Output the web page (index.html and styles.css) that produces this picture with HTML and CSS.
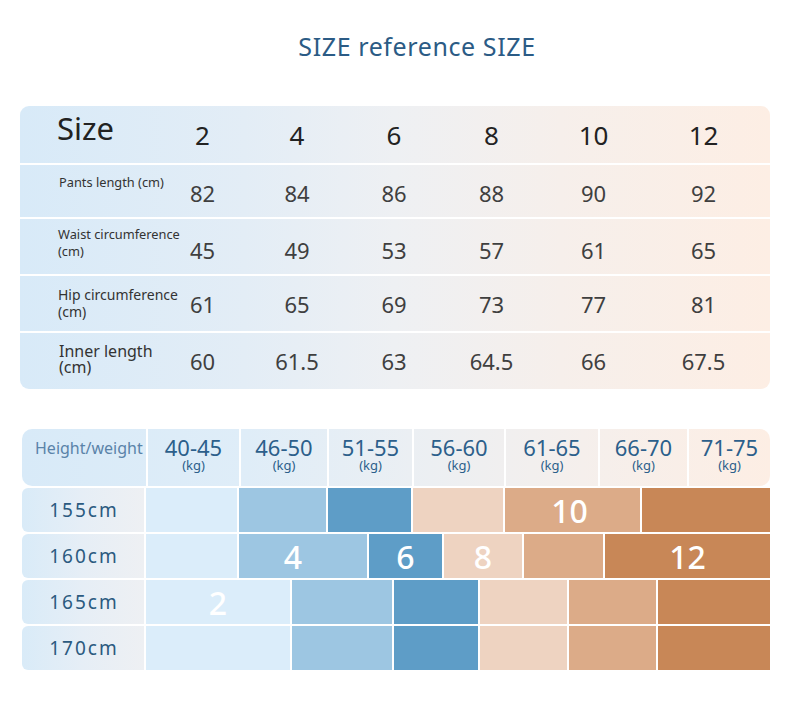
FILE: index.html
```html
<!DOCTYPE html>
<html>
<head>
<meta charset="utf-8">
<link rel="stylesheet" href="styles.css">
</head>
<body>
<div class="page">
  <h1 class="title">SIZE reference SIZE</h1>

  <div class="size-table">
    <div class="row head">
      <div class="label size-word">Size</div>
      <div class="num">2</div><div class="num">4</div><div class="num">6</div><div class="num">8</div><div class="num">10</div><div class="num">12</div>
    </div>
    <div class="row r1">
      <div class="label l-pants">Pants length (cm)</div>
      <div class="num">82</div><div class="num">84</div><div class="num">86</div><div class="num">88</div><div class="num">90</div><div class="num">92</div>
    </div>
    <div class="row r2">
      <div class="label l-waist">Waist circumference<br>(cm)</div>
      <div class="num">45</div><div class="num">49</div><div class="num">53</div><div class="num">57</div><div class="num">61</div><div class="num">65</div>
    </div>
    <div class="row r3">
      <div class="label l-hip">Hip circumference<br>(cm)</div>
      <div class="num">61</div><div class="num">65</div><div class="num">69</div><div class="num">73</div><div class="num">77</div><div class="num">81</div>
    </div>
    <div class="row r4">
      <div class="label l-inner">Inner length<br>(cm)</div>
      <div class="num">60</div><div class="num">61.5</div><div class="num">63</div><div class="num">64.5</div><div class="num">66</div><div class="num">67.5</div>
    </div>
  </div>

  <div class="hw-table">
    <div class="hw-head">
      <div class="hw-corner">Height/weight</div>
      <div class="hw-range w1"><span class="kgv">40-45</span><span class="kg">(kg)</span></div>
      <div class="hw-range w2"><span class="kgv">46-50</span><span class="kg">(kg)</span></div>
      <div class="hw-range w3"><span class="kgv">51-55</span><span class="kg">(kg)</span></div>
      <div class="hw-range w4"><span class="kgv">56-60</span><span class="kg">(kg)</span></div>
      <div class="hw-range w5"><span class="kgv">61-65</span><span class="kg">(kg)</span></div>
      <div class="hw-range w6"><span class="kgv">66-70</span><span class="kg">(kg)</span></div>
      <div class="hw-range w7"><span class="kgv">71-75</span><span class="kg">(kg)</span></div>
    </div>

    <div class="hw-row">
      <div class="hw-label">155cm</div>
      <div class="seg c1" style="width:91px"></div>
      <div class="seg c2" style="width:87px"></div>
      <div class="seg c3" style="width:83px"></div>
      <div class="seg c4" style="width:90px"></div>
      <div class="seg c5 t10" style="width:135px">10</div>
      <div class="seg c6 grow"></div>
    </div>
    <div class="hw-row">
      <div class="hw-label">160cm</div>
      <div class="seg c1" style="width:91px"></div>
      <div class="seg c2 t4" style="width:128px">4</div>
      <div class="seg c3" style="width:73px">6</div>
      <div class="seg c4" style="width:78px">8</div>
      <div class="seg c5" style="width:79px"></div>
      <div class="seg c6 grow">12</div>
    </div>
    <div class="hw-row">
      <div class="hw-label">165cm</div>
      <div class="seg c1" style="width:144px">2</div>
      <div class="seg c2" style="width:100px"></div>
      <div class="seg c3" style="width:84px"></div>
      <div class="seg c4" style="width:87px"></div>
      <div class="seg c5" style="width:87px"></div>
      <div class="seg c6 grow"></div>
    </div>
    <div class="hw-row">
      <div class="hw-label">170cm</div>
      <div class="seg c1" style="width:144px"></div>
      <div class="seg c2" style="width:100px"></div>
      <div class="seg c3" style="width:84px"></div>
      <div class="seg c4" style="width:87px"></div>
      <div class="seg c5" style="width:87px"></div>
      <div class="seg c6 grow"></div>
    </div>
  </div>
</div>
</body>
</html>
```

FILE: styles.css
```css
* { box-sizing: border-box; }
html, body { margin: 0; padding: 0; background: #ffffff; }
body { font-family: "Noto Sans", "Open Sans", sans-serif; width: 790px; height: 704px; overflow: hidden; }

.page { padding-top: 31px; }

.title {
  margin: 0;
  text-align: center;
  font-size: 25px;
  line-height: 30px;
  font-weight: 400;
  letter-spacing: 0.6px;
  color: #2b5b85;
  padding-left: 44px;
}

/* ---------- size table ---------- */
.size-table {
  margin: 45px 0 0 20px;
  width: 750px;
  border-radius: 9px;
  overflow: hidden;
  display: flex;
  flex-direction: column;
  gap: 2px;
}
.row {
  display: grid;
  grid-template-columns: 136px 93px 96px 98px 97px 107px 113px 1fr;
  align-items: center;
  background: linear-gradient(90deg, #d8eaf8 0%, #e3edf6 30%, #eef0f3 50%, #f6efeb 72%, #fdeee4 100%);
}
.row.head { height: 57px; }
.row.r1 { height: 52px; }
.row.r2 { height: 55px; }
.row.r3 { height: 55px; }
.row.r4 { height: 56px; }

.label { padding-left: 38px; color: #333; align-self: start; white-space: nowrap; }
.size-word { font-size: 31px; line-height: 36px; color: #222; padding-top: 4px; padding-left: 37px; }
.l-pants { font-size: 12.8px; line-height: 16px; padding-top: 9px; padding-left: 39px; }
.l-waist { font-size: 12.8px; line-height: 17px; padding-top: 7px; }
.l-hip { font-size: 14px; line-height: 17px; padding-top: 10px; }
.l-inner { font-size: 16px; line-height: 16px; padding-top: 10px; padding-left: 39px; }

.num { text-align: center; font-size: 22px; color: #3f3f3f; }
.head .num { font-size: 26px; color: #222; }
.r1 .num { padding-top: 4px; }
.r2 .num { padding-top: 6px; }

/* ---------- height / weight table ---------- */
.hw-table {
  margin: 40px 0 0 22px;
  width: 748px;
  display: flex;
  flex-direction: column;
  gap: 2px;
}
.hw-head {
  display: flex;
  height: 57px;
  border-radius: 10px;
  overflow: hidden;
  background: linear-gradient(90deg, #d8eaf8 0%, #dfedf8 30%, #ebeff3 52%, #f5efec 75%, #fdeee4 100%);
}
.hw-corner {
  width: 124px;
  padding: 8px 0 0 13px;
  font-size: 16px;
  color: #5a83a9;
  white-space: nowrap;
}
.hw-range {
  border-left: 2px solid #fff;
  display: flex;
  flex-direction: column;
  align-items: center;
  padding-top: 7px;
  color: #2c5f8b;
}
.w1 { width: 93px; }
.w2 { width: 88px; }
.w3 { width: 85px; }
.w4 { width: 92px; }
.w5 { width: 94px; }
.w6 { width: 89px; }
.w7 { flex: 1; }
.kgv { font-size: 22px; line-height: 23px; }
.kg { font-size: 13px; line-height: 12px; }

.hw-row {
  display: flex;
  gap: 2px;
  height: 44px;
}
.hw-label {
  width: 122px;
  border-radius: 6px 0 0 6px;
  background: linear-gradient(90deg, #d9ebf8 0%, #e6eef6 50%, #eef0f3 100%);
  display: flex;
  align-items: center;
  justify-content: center;
  font-size: 19px;
  letter-spacing: 2px;
  color: #2b5a80;
  padding-left: 2px;
}
.seg {
  display: flex;
  align-items: center;
  justify-content: center;
  color: #fff;
  font-size: 32px;
  font-weight: 500;
}
.t4 { padding-right: 20px; }
.t10 { padding-right: 6px; }
.grow { flex: 1; }
.c1 { background: #dbedfa; }
.c2 { background: #9dc6e2; }
.c3 { background: #5e9dc7; }
.c4 { background: #eed3c1; }
.c5 { background: #dcab88; }
.c6 { background: #c88757; }
```
